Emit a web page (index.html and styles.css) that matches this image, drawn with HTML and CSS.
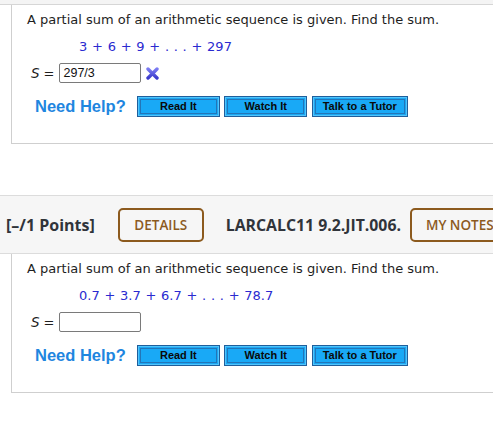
FILE: index.html
```html
<!DOCTYPE html>
<html>
<head>
<meta charset="utf-8">
<link rel="stylesheet" href="styles.css">
</head>
<body>
<div class="topband"></div>
<div class="card">
  <div class="prompt">A partial sum of an arithmetic sequence is given. Find the sum.</div>
  <div class="math">3 + 6 + 9 + . . . + 297</div>
  <div class="answer">
    <span class="svar">S</span><span class="eq">=</span>
    <span class="box">297/3</span>
    <svg class="xmark" width="13" height="13" viewBox="0 0 13 13">
      <defs><linearGradient id="xg" x1="0" y1="0" x2="0" y2="1"><stop offset="0" stop-color="#7b7bf2"/><stop offset="1" stop-color="#3a3acb"/></linearGradient></defs>
      <path d="M2 2 L11 11 M11 2 L2 11" stroke="url(#xg)" stroke-width="3.4" stroke-linecap="round"/>
    </svg>
  </div>
  <div class="help">
    <span class="needhelp">Need Help?</span>
    <span class="btn w83">Read It</span>
    <span class="btn w83">Watch It</span>
    <span class="btn w96">Talk to a Tutor</span>
  </div>
</div>
<div class="header">
  <span class="points">[–/1 Points]</span>
  <span class="outline details">DETAILS</span>
  <span class="code">LARCALC11 9.2.JIT.006.</span>
  <span class="outline notes">MY NOTES</span>
</div>
<div class="card">
  <div class="prompt">A partial sum of an arithmetic sequence is given. Find the sum.</div>
  <div class="math">0.7 + 3.7 + 6.7 + . . . + 78.7</div>
  <div class="answer">
    <span class="svar">S</span><span class="eq">=</span>
    <span class="box"></span>
  </div>
  <div class="help">
    <span class="needhelp">Need Help?</span>
    <span class="btn w83">Read It</span>
    <span class="btn w83">Watch It</span>
    <span class="btn w96">Talk to a Tutor</span>
  </div>
</div>
</body>
</html>
```
FILE: styles.css
```css
html, body {
  margin: 0;
  padding: 0;
  background: #ffffff;
  overflow: hidden;
}
body {
  width: 493px;
  font-family: "DejaVu Sans", Verdana, sans-serif;
  color: #1e1e1e;
}
.topband {
  height: 4px;
  background: #f4f4f4;
  border-bottom: 1px solid #d6d6d6;
}
.card {
  margin-left: 11px;
  border-left: 1px solid #cfcfcf;
  border-bottom: 1px solid #cfcfcf;
  padding-left: 15px;
  padding-bottom: 18px;
}
.prompt {
  height: 30px;
  line-height: 30px;
  font-size: 13px;
  white-space: nowrap;
}
.math {
  height: 24px;
  line-height: 24px;
  font-size: 13px;
  padding-left: 52px;
  color: #2a2ad0;
  white-space: pre;
  word-spacing: 0.6px;
}
.answer {
  height: 28px;
  display: flex;
  align-items: center;
  padding-left: 4px;
  font-size: 13px;
}
.svar {
  font-style: italic;
  font-size: 13.5px;
}
.eq {
  margin-left: 4px;
  margin-right: 5px;
}
.box {
  height: 18px;
  border: 1px solid #7a7a7a;
  border-radius: 2px;
  font-family: "Liberation Sans", Arial, sans-serif;
  font-size: 12.5px;
  line-height: 18px;
  padding-left: 3px;
  box-sizing: content-box;
  width: 77px;
  color: #111;
}
.xmark {
  margin-left: 5px;
}
.help {
  height: 38px;
  display: flex;
  align-items: center;
  padding-left: 8px;
}
.needhelp {
  font-family: "Liberation Sans", Arial, sans-serif;
  font-weight: bold;
  font-size: 16.5px;
  color: #1f86df;
  margin-right: 11px;
}
.btn {
  box-sizing: border-box;
  height: 21px;
  border: 1px solid #1f5f9c;
  background: #19a9f6;
  box-shadow: inset 0 0 0 1px #52c4fb, inset 0 0 0 2px #1aa6f2, inset 0 0 0 3px #2376b8;
  font-family: "Liberation Sans", Arial, sans-serif;
  font-weight: bold;
  font-size: 11px;
  color: #0a0a0a;
  display: flex;
  align-items: center;
  justify-content: center;
  margin-right: 4.5px;
}
.w83 { width: 83px; }
.w96 { width: 96px; }
.header {
  margin-top: 51px;
  height: 57px;
  background: #f6f6f6;
  border-top: 1px solid #dcdcdc;
  border-bottom: 1px solid #dcdcdc;
  display: flex;
  align-items: center;
  padding-left: 6px;
  white-space: nowrap;
  font-family: "Open Sans", sans-serif;
}
.points {
  font-weight: 700;
  font-size: 16px;
  color: #30343a;
  margin-right: 23px;
  flex-shrink: 0;
}
.outline {
  box-sizing: border-box;
  height: 34px;
  border: 2px solid #8c5a1e;
  border-radius: 5px;
  color: #8c5a1e;
  font-weight: 600;
  font-size: 13.5px;
  display: flex;
  align-items: center;
  justify-content: center;
  flex-shrink: 0;
}
.details {
  width: 86px;
  margin-right: 22px;
}
.code {
  font-weight: 700;
  font-size: 15.8px;
  color: #30343a;
  margin-right: 9px;
  flex-shrink: 0;
}
.notes {
  width: 100px;
  padding-left: 14px;
  justify-content: flex-start;
}
```
